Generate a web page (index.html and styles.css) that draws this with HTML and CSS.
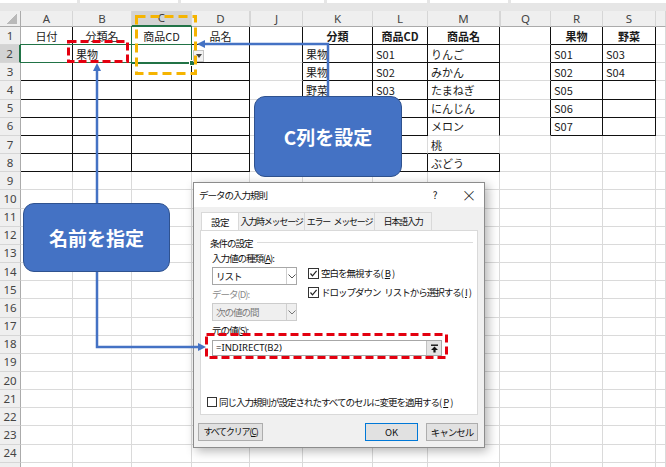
FILE: index.html
```html
<!DOCTYPE html>
<html lang="ja">
<head>
<meta charset="utf-8">
<title>データの入力規則</title>
<link rel="stylesheet" href="styles.css">
</head>
<body>
<div class="app">
  <div class="topbar"><span class="w77"></span><span class="w98"></span><span class="w143"></span><span class="w100"></span><span class="w78"></span><span class="wrest"></span></div>
  <table class="sheet">
    <colgroup>
      <col class="c-rh"><col class="c-a"><col class="c-b"><col class="c-c"><col class="c-d"><col class="c-j"><col class="c-k"><col class="c-l"><col class="c-m"><col class="c-q"><col class="c-r"><col class="c-s"><col class="c-x">
    </colgroup>
    <thead>
      <tr><th class="corner"></th><th>A</th><th>B</th><th class="hc">C</th><th>D</th><th class="gap">J</th><th>K</th><th>L</th><th>M</th><th class="gap">Q</th><th>R</th><th>S</th><th></th></tr>
    </thead>
    <tbody>
      <tr><th>1</th><td class="k c">日付</td><td class="k c">分類名</td><td class="k c">商品CD</td><td class="k c">品名</td><td class="r"></td><td class="k c bd">分類</td><td class="k c bd">商品CD</td><td class="k c bd">商品名</td><td class="r"></td><td class="k c bd">果物</td><td class="k c bd">野菜</td><td></td></tr>
      <tr><th class="hl">2</th><td class="k"></td><td class="k">果物</td><td class="k"></td><td class="k"></td><td class="r"></td><td class="k">果物</td><td class="k">S01</td><td class="k">りんご</td><td class="r"></td><td class="k">S01</td><td class="k">S03</td><td></td></tr>
      <tr><th>3</th><td class="k"></td><td class="k"></td><td class="k"></td><td class="k"></td><td class="r"></td><td class="k">果物</td><td class="k">S02</td><td class="k">みかん</td><td class="r"></td><td class="k">S02</td><td class="k">S04</td><td></td></tr>
      <tr><th>4</th><td class="k"></td><td class="k"></td><td class="k"></td><td class="k"></td><td class="r"></td><td class="k">野菜</td><td class="k">S03</td><td class="k">たまねぎ</td><td class="r"></td><td class="k">S05</td><td class="k"></td><td></td></tr>
      <tr><th>5</th><td class="k"></td><td class="k"></td><td class="k"></td><td class="k"></td><td class="r"></td><td class="k"></td><td class="k"></td><td class="k">にんじん</td><td class="r"></td><td class="k">S06</td><td class="k"></td><td></td></tr>
      <tr><th>6</th><td class="k"></td><td class="k"></td><td class="k"></td><td class="k"></td><td class="r"></td><td class="k"></td><td class="k"></td><td class="r">メロン</td><td class="r"></td><td class="k">S07</td><td class="k"></td><td></td></tr>
      <tr><th>7</th><td class="k"></td><td class="k"></td><td class="k"></td><td class="k"></td><td class="r"></td><td class="k"></td><td class="b"></td><td class="b">桃</td><td></td><td></td><td></td><td></td></tr>
      <tr><th>8</th><td class="k"></td><td class="k"></td><td class="k"></td><td class="k"></td><td class="r"></td><td class="k"></td><td class="k"></td><td class="k">ぶどう</td><td></td><td></td><td></td><td></td></tr>
      <tr><th>9</th><td></td><td></td><td></td><td></td><td></td><td></td><td></td><td></td><td></td><td></td><td></td><td></td></tr>
      <tr><th>10</th><td></td><td></td><td></td><td></td><td></td><td></td><td></td><td></td><td></td><td></td><td></td><td></td></tr>
      <tr><th>11</th><td></td><td></td><td></td><td></td><td></td><td></td><td></td><td></td><td></td><td></td><td></td><td></td></tr>
      <tr><th>12</th><td></td><td></td><td></td><td></td><td></td><td></td><td></td><td></td><td></td><td></td><td></td><td></td></tr>
      <tr><th>13</th><td></td><td></td><td></td><td></td><td></td><td></td><td></td><td></td><td></td><td></td><td></td><td></td></tr>
      <tr><th>14</th><td></td><td></td><td></td><td></td><td></td><td></td><td></td><td></td><td></td><td></td><td></td><td></td></tr>
      <tr><th>15</th><td></td><td></td><td></td><td></td><td></td><td></td><td></td><td></td><td></td><td></td><td></td><td></td></tr>
      <tr><th>16</th><td></td><td></td><td></td><td></td><td></td><td></td><td></td><td></td><td></td><td></td><td></td><td></td></tr>
      <tr><th>17</th><td></td><td></td><td></td><td></td><td></td><td></td><td></td><td></td><td></td><td></td><td></td><td></td></tr>
      <tr><th>18</th><td></td><td></td><td></td><td></td><td></td><td></td><td></td><td></td><td></td><td></td><td></td><td></td></tr>
      <tr><th>19</th><td></td><td></td><td></td><td></td><td></td><td></td><td></td><td></td><td></td><td></td><td></td><td></td></tr>
      <tr><th>20</th><td></td><td></td><td></td><td></td><td></td><td></td><td></td><td></td><td></td><td></td><td></td><td></td></tr>
      <tr><th>21</th><td></td><td></td><td></td><td></td><td></td><td></td><td></td><td></td><td></td><td></td><td></td><td></td></tr>
      <tr><th>22</th><td></td><td></td><td></td><td></td><td></td><td></td><td></td><td></td><td></td><td></td><td></td><td></td></tr>
      <tr><th>23</th><td></td><td></td><td></td><td></td><td></td><td></td><td></td><td></td><td></td><td></td><td></td><td></td></tr>
      <tr><th>24</th><td></td><td></td><td></td><td></td><td></td><td></td><td></td><td></td><td></td><td></td><td></td><td></td></tr>
      <tr><th></th><td></td><td></td><td></td><td></td><td></td><td></td><td></td><td></td><td></td><td></td><td></td><td></td></tr>
    </tbody>
  </table>

  <div class="sel-row"></div>
  <div class="sel-col"></div>
  <div class="fill-handle"></div>
  <div class="cell-dd"><svg width="6" height="4" viewBox="0 0 6 4"><polygon points="0,0 6,0 3,4" fill="#444"/></svg></div>

  <div class="callout callout-name">名前を指定</div>
  <div class="callout callout-col">C列を設定</div>

  <div class="dialog">
    <div class="dlg-title"><span class="dlg-name">データの入力規則</span><span class="dlg-help">?</span><span class="dlg-close">×</span></div>
    <div class="tabs"><span class="tab on">設定</span><span class="tab t2">入力時メッセージ</span><span class="tab t3">エラー&ensp;メッセージ</span><span class="tab t4">日本語入力</span></div>
    <div class="panel">
      <div class="grp">条件の設定</div>
      <div class="lbl">入力値の種類(<u>A</u>):</div>
      <div class="cols">
        <div class="lcol">
          <div class="select"><span class="sv">リスト</span><span class="chev"><svg width="8" height="5" viewBox="0 0 8 5"><polyline points="0.5,0.5 4,4 7.5,0.5" fill="none" stroke="#555" stroke-width="1"/></svg></span></div>
          <div class="lbl dis">データ(D):</div>
          <div class="select disabled"><span class="sv">次の値の間</span><span class="chev"><svg width="8" height="5" viewBox="0 0 8 5"><polyline points="0.5,0.5 4,4 7.5,0.5" fill="none" stroke="#777" stroke-width="1"/></svg></span></div>
        </div>
        <div class="rcol">
          <div class="cb"><span class="box"><svg width="9" height="9" viewBox="0 0 9 9"><polyline points="1.5,4.5 3.5,6.8 7.6,1.8" fill="none" stroke="#222" stroke-width="1.2"/></svg></span>空白を無視する(<u>B</u>)</div>
          <div class="cb cb2"><span class="box"><svg width="9" height="9" viewBox="0 0 9 9"><polyline points="1.5,4.5 3.5,6.8 7.6,1.8" fill="none" stroke="#222" stroke-width="1.2"/></svg></span>ドロップダウン&ensp;リストから選択する(<u>I</u>)</div>
        </div>
      </div>
      <div class="lbl">元の値(<u>S</u>):</div>
      <div class="input"><span class="iv">=INDIRECT(B2)</span><span class="upbtn"><svg width="9" height="9" viewBox="0 0 9 9"><rect x="1" y="0.5" width="7" height="1.4" fill="#111"/><polygon points="4.5,2.5 8,6 5.6,6 5.6,8.5 3.4,8.5 3.4,6 1,6" fill="#111"/></svg></span></div>
      <div class="cb cb-bottom"><span class="box small"></span>同じ入力規則が設定されたすべてのセルに変更を適用する(<u>P</u>)</div>
    </div>
    <div class="btns"><span class="btn clear">すべてクリア(<u>C</u>)</span><span class="btn ok">OK</span><span class="btn cancel">キャンセル</span></div>
  </div>

  <svg class="marks" width="666" height="467" viewBox="0 0 666 467">
    <rect x="136.5" y="16.5" width="59" height="57" fill="none" stroke="#f5b400" stroke-width="3" stroke-dasharray="9 5"/>
    <rect x="68.5" y="41.5" width="59" height="20" fill="none" stroke="#e3000f" stroke-width="3" stroke-dasharray="8 4"/>
    <rect x="206.5" y="334.5" width="240" height="23" fill="none" stroke="#e3000f" stroke-width="3" stroke-dasharray="8 4"/>
    <polyline points="328,96 328,44 204,44" fill="none" stroke="#4472c4" stroke-width="2.5"/>
    <polygon points="197,44 205,40 205,48" fill="#4472c4"/>
    <polyline points="97,203 97,70" fill="none" stroke="#4472c4" stroke-width="2.5"/>
    <polygon points="97,63 93,71 101,71" fill="#4472c4"/>
    <polyline points="97,272 97,347 199,347" fill="none" stroke="#4472c4" stroke-width="2.5"/>
    <polygon points="206,347 198,343 198,351" fill="#4472c4"/>
  </svg>
</div>
</body>
</html>
```

FILE: styles.css
```css
html, body {
  margin: 0;
  padding: 0;
  background: #fff;
}
body {
  width: 666px;
  height: 467px;
  overflow: hidden;
  font-family: "Noto Sans CJK JP", "Noto Sans", sans-serif;
}
.app {
  position: relative;
  width: 666px;
  height: 467px;
  overflow: hidden;
}

/* top strip (bottom of formula bar) */
.topbar {
  display: flex;
  gap: 3px;
  height: 11px;
  background: #e6e6e6;
}
.topbar span { height: 3px; background: #fff; }
.topbar .w77 { width: 77px; }
.topbar .w98 { width: 98px; }
.topbar .w143 { width: 143px; }
.topbar .w100 { width: 100px; }
.topbar .w78 { width: 78px; }
.topbar .wrest { flex: 1; }

/* sheet */
.sheet {
  border-collapse: separate;
  border-spacing: 0;
  table-layout: fixed;
  width: 666px;
  font-size: 11px;
  color: #1a1a1a;
}
.c-rh { width: 21px; }
.c-a { width: 52px; }
.c-b { width: 59px; }
.c-c { width: 60px; }
.c-d { width: 58px; }
.c-j { width: 53px; }
.c-k { width: 70px; }
.c-l { width: 55px; }
.c-m { width: 72px; }
.c-q { width: 51px; }
.c-r { width: 52px; }
.c-s { width: 53px; }
.c-x { width: 10px; }

.sheet th, .sheet td {
  padding: 0;
  overflow: hidden;
  white-space: nowrap;
  line-height: 14px;
}
.sheet thead tr { height: 16px; }
.sheet thead th {
  background: #efefef;
  color: #444;
  font: 400 11.5px/14px "Noto Sans", sans-serif;
  border-right: 1px solid #d6d6d6;
  border-bottom: 1px solid #ababab;
  text-align: center;
}
.sheet thead th.gap { border-left: 1px solid #d6d6d6; }
.sheet thead th.corner {
  border-right-color: #ababab;
  background: linear-gradient(135deg, transparent 50%, #b9b9b9 50%) no-repeat right 3px bottom 2px / 10px 10px, #efefef;
}
.sheet thead th.hc {
  background: #d3d3d3;
  color: #3a3a3a;
  border-bottom: 2px solid #217346;
}
.sheet tbody tr { height: 18.17px; }
.sheet tbody th {
  background: #efefef;
  color: #444;
  font: 400 11.5px/14px "Noto Sans", sans-serif;
  border-right: 1px solid #ababab;
  border-bottom: 1px solid #d6d6d6;
  text-align: center;
}
.sheet tbody th.hl {
  background: #d3d3d3;
  border-right: 2px solid #217346;
}
.sheet td {
  border-right: 1px solid #dadada;
  border-bottom: 1px solid #dadada;
  padding: 0 3px;
  text-align: left;
}
.sheet td.k { border-right-color: #111; border-bottom-color: #111; }
.sheet td.r { border-right-color: #111; }
.sheet td.b { border-bottom-color: #111; }
.sheet td.c { text-align: center; padding: 0; }
.sheet td.bd { font-weight: 700; }

/* selection */
.sel-row {
  position: absolute;
  left: 20px;
  top: 44px;
  width: 170px;
  height: 17px;
  border: 1px solid #217346;
}
.sel-col {
  position: absolute;
  left: 131px;
  top: 26px;
  width: 59px;
  height: 35px;
  border: 1px solid #217346;
  border-bottom-width: 2px;
}
.fill-handle {
  position: absolute;
  left: 189px;
  top: 60px;
  width: 4px;
  height: 4px;
  background: #217346;
  border: 1px solid #fff;
}
.cell-dd {
  position: absolute;
  left: 193px;
  top: 50px;
  width: 9px;
  height: 10px;
  background: #f2f2f2;
  border: 1px solid #c4c4c4;
  display: flex;
  align-items: center;
  justify-content: center;
}

/* callouts */
.callout {
  position: absolute;
  box-sizing: border-box;
  background: #4472c4;
  border: 1px solid #2f528f;
  border-radius: 11px;
  color: #fff;
  font: 700 19px/1 "Noto Sans CJK JP", sans-serif;
  display: flex;
  align-items: center;
  justify-content: center;
}
.callout-name { left: 23px; top: 203px; width: 147px; height: 69px; }
.callout-col { left: 254px; top: 96px; width: 148px; height: 81px; }

/* dialog */
.dialog {
  position: absolute;
  left: 193px;
  top: 182px;
  width: 292px;
  height: 266px;
  box-sizing: border-box;
  background: #f0f0f0;
  border: 1px solid #8c8c8c;
  box-shadow: 3px 3px 10px rgba(0, 0, 0, 0.3);
  font: 400 9.5px/12px "Noto Sans CJK JP", sans-serif;
  letter-spacing: -1px;
  color: #111;
  display: flex;
  flex-direction: column;
  white-space: nowrap;
}
.dialog u { text-decoration: underline; }
.dlg-title {
  height: 24px;
  background: #fff;
  display: flex;
  align-items: center;
  padding-left: 5px;
}
.dlg-name { flex: 1; }
.dlg-help { width: 12px; text-align: center; margin-right: 13px; font-size: 10px; letter-spacing: 0; }
.dlg-close { width: 30px; text-align: center; font-size: 15px; font-weight: 300; letter-spacing: 0; }

.tabs {
  display: flex;
  margin-top: 5px;
  padding-left: 7px;
  height: 18px;
}
.tab {
  box-sizing: border-box;
  height: 18px;
  display: flex;
  align-items: center;
  justify-content: center;
  border: 1px solid #d9d9d9;
  border-bottom: none;
  border-left: none;
  background: #f0f0f0;
  font-size: 9px;
  letter-spacing: -1.2px;
  overflow: hidden;
}
.tab.on {
  width: 38px;
  background: #fff;
  border: 1px solid #d9d9d9;
  border-bottom: none;
  font-size: 9.5px;
  letter-spacing: -0.5px;
}
.tab.t2 { width: 66px; }
.tab.t3 { width: 70px; }
.tab.t4 { width: 57px; }

.panel {
  box-sizing: border-box;
  margin: 0 6px;
  height: 185px;
  background: #fff;
  border: 1px solid #d9d9d9;
  padding: 5px 4px 6px 9px;
  display: flex;
  flex-direction: column;
}
.grp {
  height: 13px;
  display: flex;
  align-items: center;
}
.grp::after {
  content: "";
  flex: 1;
  height: 1px;
  background: #dcdcdc;
  margin-left: 4px;
}
.lbl {
  height: 12px;
  margin-left: 2px;
  margin-top: 3px;
}
.lbl.dis { color: #8a8a8a; margin-left: 0; }
.cols {
  display: flex;
  gap: 11px;
  margin-left: 2px;
  margin-top: 3px;
}
.lcol { width: 85px; display: flex; flex-direction: column; }
.rcol { display: flex; flex-direction: column; }
.select {
  box-sizing: border-box;
  height: 18px;
  border: 1px solid #a7a7a7;
  background: #fff;
  display: flex;
  align-items: stretch;
}
.select .sv { flex: 1; padding-left: 3px; display: flex; align-items: center; }
.select .chev {
  width: 9px;
  border-left: 1px solid #cfcfcf;
  display: flex;
  align-items: center;
  justify-content: center;
}
.select.disabled { margin-top: 3px; background: #efefef; border-color: #cccccc; color: #7a7a7a; }
.cb {
  height: 12px;
  display: flex;
  align-items: center;
  gap: 2px;
}
.cb2 { margin-top: 7px; }
.box {
  box-sizing: border-box;
  width: 11px;
  height: 11px;
  border: 1px solid #333;
  background: #fff;
  display: flex;
  align-items: center;
  justify-content: center;
  flex: none;
}
.box.small { width: 10px; height: 10px; }
.input {
  box-sizing: border-box;
  margin-left: 2px;
  margin-top: 4px;
  width: 230px;
  height: 16px;
  border: 1px solid #a7a7a7;
  background: #fff;
  display: flex;
  align-items: stretch;
}
.input .iv {
  flex: 1;
  padding-left: 3px;
  font: 400 9.5px/14px "Noto Sans", sans-serif;
  letter-spacing: 0;
  display: flex;
  align-items: center;
}
.upbtn {
  width: 14px;
  background: #e4e4e4;
  border-left: 1px solid #c2c2c2;
  display: flex;
  align-items: center;
  justify-content: center;
}
.cb-bottom { margin-top: auto; margin-left: -3px; }

.btns {
  display: flex;
  margin-top: 8px;
  padding: 0 6px 0 4px;
}
.btn {
  box-sizing: border-box;
  height: 18px;
  border: 1px solid #adadad;
  background: #e1e1e1;
  display: flex;
  align-items: center;
  justify-content: center;
}
.btn.clear { width: 65px; font-size: 9px; letter-spacing: -1.2px; }
.btn.ok { width: 53px; margin-left: auto; border-color: #0078d7; letter-spacing: 0; }
.btn.cancel { width: 52px; margin-left: 8px; }

.marks {
  position: absolute;
  left: 0;
  top: 0;
  pointer-events: none;
}
```
